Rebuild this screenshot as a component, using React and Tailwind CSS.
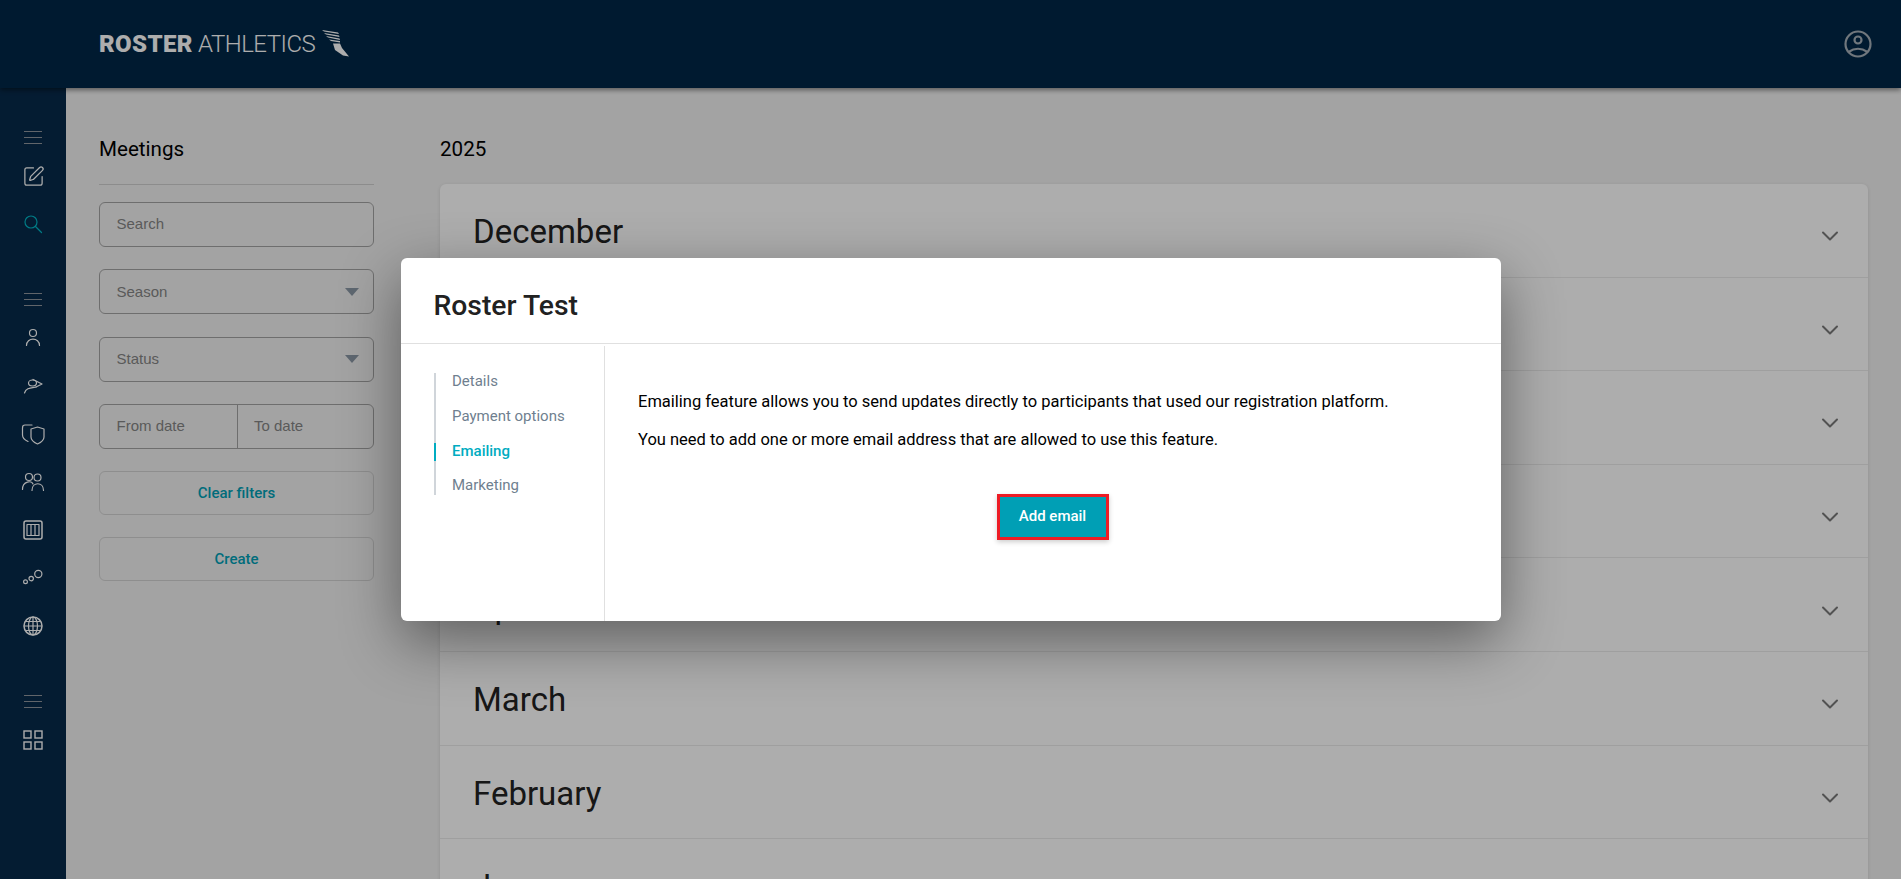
import React from 'react';
import { ChevronDown, SquarePen } from 'lucide-react';

const months = ['December', 'November', 'October', 'May', 'April', 'March', 'February', 'January'];

const Hamburger = () => (
  <div className="h-[30px] flex flex-col justify-center items-center gap-[5px]">
    <div className="w-[18px] h-px bg-[#8f959c]" />
    <div className="w-[18px] h-px bg-[#8f959c]" />
    <div className="w-[18px] h-px bg-[#8f959c]" />
  </div>
);

const NavSlot = ({ children }) => (
  <div className="h-12 flex items-center justify-center">{children}</div>
);

const Thin = ({ children, color = '#fff' }) => (
  <svg width="24" height="24" viewBox="0 0 24 24" fill="none" stroke={color} strokeWidth="1.2" strokeLinecap="round" strokeLinejoin="round">
    {children}
  </svg>
);

const Logo = () => (
  <div className="flex items-center">
    <span className="text-[24px] leading-none font-black text-white tracking-[0.4px]">ROSTER</span>
    <span className="ml-[5px] text-[24px] leading-none font-light text-white tracking-[-0.5px]">ATHLETICS</span>
    <svg className="ml-[7px] -mt-[1px]" width="28" height="28" viewBox="0 0 28 28" fill="#fff">
      <path d="M0 0 L16 2.5 L17 4 L2 1.5Z" />
      <path d="M2 3 L17 5.5 L17.5 7 L4 4.5Z" />
      <path d="M4 6 L17.5 8.5 L18 10 L6 7.5Z" />
      <path d="M7 9.5 L18 11 L18 12.5 L9 11Z" />
      <path d="M11 13.5 L18 13.5 L20 18 L27 26.5 L21 25.5 L13 20Z" />
    </svg>
  </div>
);

const FilterBox = ({ children, caret }) => (
  <div className='h-[45px] rounded-md border border-[#a3a3a3] flex items-center justify-between pl-[16.5px] pr-[14px] text-[15px] text-[#858585] font-["Liberation_Sans",sans-serif]'>
    <span>{children}</span>
    {caret && (
      <svg width="14" height="8" viewBox="0 0 14 8"><path d="M0 0H14L7 8Z" fill="#8b98a6" /></svg>
    )}
  </div>
);

const GhostButton = ({ children }) => (
  <button className="h-[44px] w-full pt-px rounded-md border border-[#d2d2d2] text-[15px] font-medium text-[#00a0b6]">{children}</button>
);

const App = () => {
  return (
    <div className='relative h-screen overflow-hidden bg-[#f1f1f1] flex flex-col font-["Roboto",sans-serif]'>
      <header className="relative z-10 h-[88px] shrink-0 bg-[#002747] shadow-[0_2px_5px_rgba(0,0,0,0.45)] flex items-center justify-between pl-[99px] pr-[29px]">
        <Logo />
        <svg width="28" height="28" viewBox="0 0 28 28" fill="none" stroke="#a6b0b8" strokeWidth="2.2">
          <circle cx="14" cy="14" r="12.5" />
          <circle cx="14" cy="10" r="3.5" />
          <path d="M4.5 22 Q14 15.5 23.5 22" />
        </svg>
      </header>

      <div className="flex flex-1 min-h-0">
        <aside className="w-[66px] shrink-0 bg-[#072a4b] pt-[34px] flex flex-col">
          <Hamburger />
          <NavSlot><SquarePen size={23} color="#fff" strokeWidth={1.3} /></NavSlot>
          <NavSlot>
            <Thin color="#00b5c4">
              <circle cx="10" cy="10" r="6" />
              <path d="M14.5 14.5L20.5 20.5" />
            </Thin>
          </NavSlot>

          <div className="mt-9"><Hamburger /></div>
          <NavSlot>
            <Thin>
              <circle cx="12" cy="7" r="3.5" />
              <path d="M5.5 19.5 C5.5 11 18.5 11 18.5 19.5" />
            </Thin>
          </NavSlot>
          <NavSlot>
            <Thin>
              <ellipse cx="11.5" cy="9" rx="4" ry="3" />
              <path d="M12 5.5 L21 10 L15 13" />
              <path d="M3.5 19 C5 14 9 14 15 13" />
            </Thin>
          </NavSlot>
          <NavSlot>
            <Thin>
              <path d="M11 3 H4 Q1.5 3 1.5 6 V13 Q1.5 17 7 19.5" />
              <path d="M16.5 5 L23 7 V15 Q23 19 16.5 22 Q10 19 10 15 V7Z" />
            </Thin>
          </NavSlot>
          <NavSlot>
            <Thin>
              <circle cx="8" cy="7" r="3.5" />
              <circle cx="16.5" cy="7.5" r="3.5" />
              <path d="M1.5 19.5 C1.5 10.5 11 10.5 12 14" />
              <path d="M11 20.5 C11 11.5 22.5 11.5 22.5 20.5" />
            </Thin>
          </NavSlot>
          <NavSlot>
            <Thin>
              <rect x="3" y="3" width="18" height="18" rx="2" strokeWidth="1.5" />
              <rect x="6" y="6.5" width="12" height="11" />
              <path d="M10 6.5V17.5M14 6.5V17.5" />
            </Thin>
          </NavSlot>
          <NavSlot>
            <Thin>
              <circle cx="4.5" cy="15.8" r="1.9" />
              <circle cx="10.2" cy="12.6" r="2.2" />
              <circle cx="17.3" cy="8" r="3.6" />
            </Thin>
          </NavSlot>
          <NavSlot>
            <svg width="20" height="20" viewBox="0 0 20 20" fill="none" stroke="#fff" strokeWidth="1.2">
              <circle cx="10" cy="10" r="9" strokeWidth="1.5" />
              <ellipse cx="10" cy="10" rx="4.5" ry="9" />
              <path d="M10 1V19M1 10H19M2.5 5.5H17.5M2.5 14.5H17.5" />
            </svg>
          </NavSlot>

          <div className="mt-9"><Hamburger /></div>
          <NavSlot>
            <svg width="20" height="20" viewBox="0 0 20 20" fill="none" stroke="#fff" strokeWidth="1.4">
              <rect x="1" y="1" width="7" height="7" />
              <rect x="12" y="1" width="7" height="7" />
              <rect x="1" y="12" width="7" height="7" />
              <rect x="12" y="12" width="7" height="7" />
            </svg>
          </NavSlot>
        </aside>

        <main className="flex-1 min-w-0 flex pl-[33px] pr-[33px]">
          <section className="w-[275px] shrink-0">
            <h2 className="mt-[49px] h-6 leading-6 text-[20.6px] text-black">Meetings</h2>
            <div className="mt-[23px] border-t border-[#cfcfcf]" />
            <div className="mt-[17px] flex flex-col gap-[22.4px]">
              <FilterBox>Search</FilterBox>
              <FilterBox caret>Season</FilterBox>
              <FilterBox caret>Status</FilterBox>
              <div className='h-[45px] rounded-md border border-[#a3a3a3] flex text-[15px] text-[#858585] font-["Liberation_Sans",sans-serif]'>
                <div className="w-[138px] border-r border-[#a3a3a3] pl-[16.5px] flex items-center">From date</div>
                <div className="flex-1 pl-4 flex items-center">To date</div>
              </div>
              <div className="-mt-px flex flex-col gap-[22px]">
                <GhostButton>Clear filters</GhostButton>
                <GhostButton>Create</GhostButton>
              </div>
            </div>
          </section>

          <section className="flex-1 min-w-0 ml-[66px]">
            <h2 className="mt-[49px] h-6 leading-6 text-[20.6px] text-black">2025</h2>
            <div className="mt-[23px] bg-white rounded-md shadow-[0_1px_4px_rgba(0,0,0,0.12)]">
              {months.map((m) => (
                <div key={m} className="h-[93.6px] border-b border-[#ebebeb] flex items-center justify-between pl-[33px] pr-[24px]">
                  <span className="text-[33px] leading-9 text-[#222] mt-1">{m}</span>
                  <ChevronDown size={28} color="#7a7a7a" strokeWidth={1.7} className="mt-[12px]" />
                </div>
              ))}
            </div>
          </section>
        </main>
      </div>

      {/* modal layer */}
      <div className="absolute inset-0 z-20 bg-black/[0.32] flex items-center justify-center">
        <div className="w-[1100px] h-[363px] bg-white rounded-md shadow-[0_20px_60px_rgba(0,0,0,0.45)] flex flex-col">
          <div className="h-[86px] shrink-0 border-b border-[#e0e0e0] pl-[33px] flex items-center">
            <h1 className="text-[28.3px] leading-9 font-medium text-[#212121] mt-[11px]">Roster Test</h1>
          </div>
          <div className="flex-1 flex min-h-0 pt-[2px]">
            <nav className="w-[204px] shrink-0 border-r border-[#e0e0e0] pt-[27px] pl-[33px]">
              <ul className="border-l-2 border-[#d0d5da] text-[15px] leading-[17.5px] text-[#6f7f8f] flex flex-col gap-[17.3px]">
                <li className="h-[17.5px] pl-[16.5px] flex items-center">Details</li>
                <li className="h-[17.5px] pl-[16.5px] flex items-center">Payment options</li>
                <li className="relative h-[17.5px] pl-[16.5px] flex items-center text-[#00acc1] font-medium">
                  <span className="absolute -left-[2px] top-0 h-[18px] w-[2px] bg-[#00acc1]" />
                  Emailing
                </li>
                <li className="h-[17.5px] pl-[16.5px] flex items-center">Marketing</li>
              </ul>
            </nav>
            <div className="flex-1 min-w-0 pl-[33.5px] pt-[44px] text-[16.5px] text-black">
              <p className="leading-6">Emailing feature allows you to send updates directly to participants that used our registration platform.</p>
              <p className="mt-[14px] leading-6">You need to add one or more email address that are allowed to use this feature.</p>
              <div className="mt-[42px] flex justify-center pr-[33.5px]">
                <button className="w-[112px] h-[46px] pb-px bg-[#009fb5] border-[3px] border-[#ee1c25] text-white text-[15px] font-medium shadow-[0_2px_5px_rgba(0,0,0,0.2)]">Add email</button>
              </div>
            </div>
          </div>
        </div>
      </div>
    </div>
  );
};

export default App;
